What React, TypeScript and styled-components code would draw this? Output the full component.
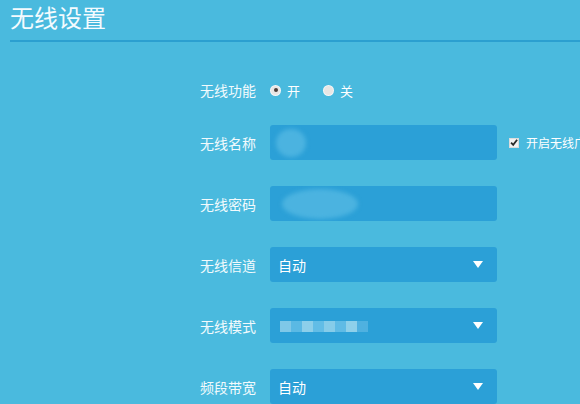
import React from 'react'
import styled, { createGlobalStyle } from 'styled-components'

const Global = createGlobalStyle`
  html, body {
    margin: 0;
    padding: 0;
    background: #4abade;
  }
  body {
    width: 580px;
    height: 404px;
    overflow: hidden;
    font-family: "Microsoft YaHei", "Noto Sans CJK SC", "Liberation Sans", sans-serif;
    color: #fff;
  }
`

const Page = styled.div`
  width: 580px;
  height: 404px;
  overflow: hidden;
`

const Header = styled.div`
  margin-left: 10px;
  border-bottom: 2px solid #2b9fd0;
  height: 42px;
  box-sizing: border-box;
`

const Title = styled.h1`
  margin: 0;
  font-size: 24px;
  font-weight: 400;
  line-height: 34px;
  color: #f4fbfe;
`

const Form = styled.div`
  display: flex;
  flex-direction: column;
  padding-top: 37px;
`

const Row = styled.div<{ $top?: number; $tall?: boolean }>`
  display: flex;
  align-items: center;
  height: ${(p) => (p.$tall ? '35px' : '22px')};
  margin-top: ${(p) => p.$top ?? 0}px;
`

const Label = styled.div`
  width: 256px;
  text-align: right;
  font-size: 14px;
  color: #f2fafd;
  flex-shrink: 0;
`

const Field = styled.div`
  margin-left: 14px;
  width: 227px;
  height: 35px;
  border-radius: 3px;
  background: #2ba0d7;
  display: flex;
  align-items: center;
  padding: 0 14px 0 8px;
  box-sizing: border-box;
  position: relative;
  overflow: hidden;
  flex-shrink: 0;
`

const FieldText = styled.span`
  font-size: 14px;
  color: #fff;
  flex: 1;
`

const Caret = styled.span`
  width: 0;
  height: 0;
  border-left: 5px solid transparent;
  border-right: 5px solid transparent;
  border-top: 7px solid #fff;
`

const Blob = styled.span<{ $w: number; $h: number; $dx: number }>`
  display: inline-block;
  width: ${(p) => p.$w}px;
  height: ${(p) => p.$h}px;
  margin-left: ${(p) => p.$dx}px;
  border-radius: 50%;
  background: #4bb3e0;
  filter: blur(2px);
`

const Mosaic = styled.span`
  display: inline-flex;
  margin-left: 2px;
  filter: blur(0.6px);
`

const Tile = styled.span<{ $c: string }>`
  width: 11px;
  height: 11px;
  background: ${(p) => p.$c};
`

const Radios = styled.div`
  margin-left: 15px;
  display: flex;
  align-items: center;
  gap: 7px;
  font-size: 13px;
`

const RadioDot = styled.span<{ $on?: boolean }>`
  width: 9px;
  height: 9px;
  border-radius: 50%;
  background: #e9e6e4;
  box-shadow: 0 0 0 1px #f6f6f6;
  display: inline-flex;
  align-items: center;
  justify-content: center;
  &::after {
    content: '';
    width: 4px;
    height: 4px;
    border-radius: 50%;
    background: ${(p) => (p.$on ? '#4a3f3c' : 'transparent')};
  }
`

const RadioText = styled.span<{ $space?: boolean }>`
  margin-right: ${(p) => (p.$space ? '17px' : '0')};
`

const Check = styled.div`
  margin-left: 12px;
  display: flex;
  align-items: center;
  gap: 7px;
  font-size: 12px;
  white-space: nowrap;
`

const Box = styled.span`
  width: 10px;
  height: 10px;
  background: #f2f2f2;
  border: 1px solid #dcdcdc;
  box-sizing: border-box;
  display: inline-flex;
  align-items: center;
  justify-content: center;
`

function CheckMark() {
  return (
    <svg width="9" height="9" viewBox="0 0 9 9">
      <path d="M1.2 4.6 L3.6 7.2 L8 1.4" stroke="#2a2a2a" strokeWidth="2" fill="none" />
    </svg>
  )
}

export default function App() {
  return (
    <Page>
      <Global />
      <Header>
        <Title>无线设置</Title>
      </Header>
      <Form>
        <Row>
          <Label>无线功能</Label>
          <Radios>
            <RadioDot $on />
            <RadioText $space>开</RadioText>
            <RadioDot />
            <RadioText>关</RadioText>
          </Radios>
        </Row>
        <Row $tall $top={24}>
          <Label>无线名称</Label>
          <Field>
            <Blob $w={30} $h={28} $dx={-2} />
          </Field>
          <Check>
            <Box>
              <CheckMark />
            </Box>
            开启无线广播
          </Check>
        </Row>
        <Row $tall $top={26}>
          <Label>无线密码</Label>
          <Field>
            <Blob $w={76} $h={30} $dx={4} />
          </Field>
        </Row>
        <Row $tall $top={26}>
          <Label>无线信道</Label>
          <Field>
            <FieldText>自动</FieldText>
            <Caret />
          </Field>
        </Row>
        <Row $tall $top={26}>
          <Label>无线模式</Label>
          <Field>
            <FieldText>
              <Mosaic>
                <Tile $c="#7fc8e8" />
                <Tile $c="#5ab9e4" />
                <Tile $c="#8ccfea" />
                <Tile $c="#62bde6" />
                <Tile $c="#86cce9" />
                <Tile $c="#5fbbe5" />
                <Tile $c="#8ed0ea" />
                <Tile $c="#4fb1e0" />
              </Mosaic>
            </FieldText>
            <Caret />
          </Field>
        </Row>
        <Row $tall $top={26}>
          <Label>频段带宽</Label>
          <Field>
            <FieldText>自动</FieldText>
            <Caret />
          </Field>
        </Row>
      </Form>
    </Page>
  )
}
